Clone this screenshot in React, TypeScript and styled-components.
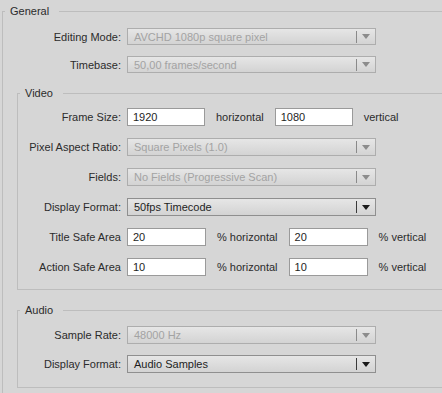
import React from "react";
import styled, { createGlobalStyle } from "styled-components";

const Global = createGlobalStyle`
  html, body { margin: 0; padding: 0; background: #d6d6d6; overflow: hidden; }
  body { font-family: "Liberation Sans", Arial, sans-serif; font-size: 11px; color: #2b2b2b; }
`;

const LINE = "#bdbdbd";

const Page = styled.div`
  width: 442px;
  height: 393px;
  overflow: hidden;
  padding: 5px 0 0 2px;
  box-sizing: border-box;
`;

const Group = styled.section<{ $width: number; $indent?: number; $top?: number }>`
  width: ${(p) => p.$width}px;
  margin-left: ${(p) => p.$indent ?? 0}px;
  margin-top: ${(p) => p.$top ?? 0}px;
  display: flex;
  flex-direction: column;
  flex-shrink: 0;
`;

const Header = styled.div`
  display: flex;
  height: 13px;
  align-items: flex-end;
`;

const Corner = styled.div`
  width: 2px;
  height: 6px;
  border-top: 1px solid ${LINE};
  border-left: 1px solid ${LINE};
`;

const Title = styled.div`
  align-self: center;
  line-height: 13px;
  padding: 0 10px 0 5px;
  color: #2b2b2b;
`;

const TopRule = styled.div`
  flex: 1;
  height: 6px;
  border-top: 1px solid ${LINE};
  border-right: 1px solid ${LINE};
`;

const Body = styled.div<{ $pt: number; $pb: number; $gap: number }>`
  border: 1px solid ${LINE};
  border-top: none;
  padding: ${(p) => p.$pt}px 0 ${(p) => p.$pb}px 0;
  display: flex;
  flex-direction: column;
  gap: ${(p) => p.$gap}px;
`;

const Row = styled.div<{ $label: number; $h: number }>`
  display: grid;
  grid-template-columns: ${(p) => p.$label}px auto;
  column-gap: 6px;
  height: ${(p) => p.$h}px;
  align-items: center;
`;

const Label = styled.div`
  text-align: right;
  white-space: nowrap;
  color: #2b2b2b;
`;

const Controls = styled.div`
  display: flex;
  align-items: center;
  gap: 11px;
  height: 100%;
`;

const Select = styled.div<{ $disabled?: boolean }>`
  width: 249px;
  height: 100%;
  box-sizing: border-box;
  border: 1px solid ${(p) => (p.$disabled ? "#adadad" : "#8f8f8f")};
  background: linear-gradient(#e6e6e6, #d3d3d3);
  display: flex;
  align-items: center;
  color: ${(p) => (p.$disabled ? "#a3a3a3" : "#1e1e1e")};
`;

const SelectText = styled.div`
  flex: 1;
  padding-left: 6px;
  white-space: nowrap;
  overflow: hidden;
`;

const Sep = styled.div<{ $disabled?: boolean }>`
  width: 1px;
  height: 12px;
  background: ${(p) => (p.$disabled ? "#8a8a8a" : "#3a3a3a")};
`;

const ArrowBox = styled.div`
  width: 18px;
  display: flex;
  justify-content: center;
  align-items: center;
`;

const Input = styled.div<{ $w: number }>`
  width: ${(p) => p.$w}px;
  height: 100%;
  box-sizing: border-box;
  border: 1px solid #9a9a9a;
  background: #fff;
  padding-left: 5px;
  display: flex;
  align-items: center;
  color: #1e1e1e;
`;

const Unit = styled.span`
  white-space: nowrap;
  color: #2b2b2b;
`;

function Dropdown({ value, disabled }: { value: string; disabled?: boolean }) {
  return (
    <Select $disabled={disabled}>
      <SelectText>{value}</SelectText>
      <Sep $disabled={disabled} />
      <ArrowBox>
        <svg width="8" height="5" viewBox="0 0 8 5">
          <path d="M0 0H8L4 5Z" fill={disabled ? "#8c8c8c" : "#1a1a1a"} />
        </svg>
      </ArrowBox>
    </Select>
  );
}

function GroupBox({
  title,
  width,
  indent,
  top,
  pt,
  pb,
  gap,
  children,
}: {
  title: string;
  width: number;
  indent?: number;
  top?: number;
  pt: number;
  pb: number;
  gap: number;
  children: React.ReactNode;
}) {
  return (
    <Group $width={width} $indent={indent} $top={top}>
      <Header>
        <Corner />
        <Title>{title}</Title>
        <TopRule />
      </Header>
      <Body $pt={pt} $pb={pb} $gap={gap}>
        {children}
      </Body>
    </Group>
  );
}

export default function App() {
  return (
    <Page>
      <Global />
      <GroupBox title="General" width={480} pt={10} pb={20} gap={11}>
        <Row $label={118} $h={17}>
          <Label>Editing Mode:</Label>
          <Controls>
            <Dropdown value="AVCHD 1080p square pixel" disabled />
          </Controls>
        </Row>
        <Row $label={118} $h={17}>
          <Label>Timebase:</Label>
          <Controls>
            <Dropdown value="50,00 frames/second" disabled />
          </Controls>
        </Row>
        <GroupBox title="Video" width={450} indent={14} top={3} pt={8} pb={13} gap={12}>
          <Row $label={103} $h={18}>
            <Label>Frame Size:</Label>
            <Controls>
              <Input $w={78}>1920</Input>
              <Unit>horizontal</Unit>
              <Input $w={78}>1080</Input>
              <Unit>vertical</Unit>
            </Controls>
          </Row>
          <Row $label={103} $h={18}>
            <Label>Pixel Aspect Ratio:</Label>
            <Controls>
              <Dropdown value="Square Pixels (1.0)" disabled />
            </Controls>
          </Row>
          <Row $label={103} $h={18}>
            <Label>Fields:</Label>
            <Controls>
              <Dropdown value="No Fields (Progressive Scan)" disabled />
            </Controls>
          </Row>
          <Row $label={103} $h={18}>
            <Label>Display Format:</Label>
            <Controls>
              <Dropdown value="50fps Timecode" />
            </Controls>
          </Row>
          <Row $label={103} $h={18}>
            <Label>Title Safe Area</Label>
            <Controls>
              <Input $w={79}>20</Input>
              <Unit>% horizontal</Unit>
              <Input $w={79}>20</Input>
              <Unit>% vertical</Unit>
            </Controls>
          </Row>
          <Row $label={103} $h={18}>
            <Label>Action Safe Area</Label>
            <Controls>
              <Input $w={79}>10</Input>
              <Unit>% horizontal</Unit>
              <Input $w={79}>10</Input>
              <Unit>% vertical</Unit>
            </Controls>
          </Row>
        </GroupBox>
        <GroupBox title="Audio" width={450} indent={14} top={3} pt={9} pb={14} gap={11}>
          <Row $label={103} $h={18}>
            <Label>Sample Rate:</Label>
            <Controls>
              <Dropdown value="48000 Hz" disabled />
            </Controls>
          </Row>
          <Row $label={103} $h={18}>
            <Label>Display Format:</Label>
            <Controls>
              <Dropdown value="Audio Samples" />
            </Controls>
          </Row>
        </GroupBox>
      </GroupBox>
    </Page>
  );
}
